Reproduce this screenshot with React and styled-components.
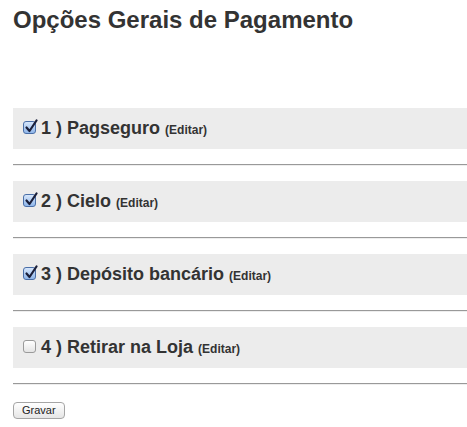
import styled, { createGlobalStyle } from 'styled-components'

const GlobalStyle = createGlobalStyle`
  body {
    margin: 0;
    background: #fff;
    font-family: 'Liberation Sans', Arial, Helvetica, sans-serif;
    color: #333;
  }
`

const options = [
  { id: 1, name: 'Pagseguro', checked: true },
  { id: 2, name: 'Cielo', checked: true },
  { id: 3, name: 'Depósito bancário', checked: true },
  { id: 4, name: 'Retirar na Loja', checked: false },
]

const Checkbox = ({ checked }) => (
  <Box checked={checked}>
    {checked && (
      <svg width='14' height='15' viewBox='0 0 14 15'>
        <path
          d='M2.5 8.5 L5.5 12 L12.5 1.5'
          fill='none'
          stroke='#1a1f3a'
          strokeWidth='2.2'
          strokeLinecap='round'
          strokeLinejoin='round'
        />
      </svg>
    )}
  </Box>
)

const App = () => {
  return (
    <Page>
      <GlobalStyle />
      <Title>Opções Gerais de Pagamento</Title>
      <List>
        {options.map((opt) => (
          <Item key={opt.id}>
            <Band>
              <Checkbox checked={opt.checked} />
              <Label>
                {opt.id} ) {opt.name} <Edit>(Editar)</Edit>
              </Label>
            </Band>
            <Rule />
          </Item>
        ))}
      </List>
      <Button>Gravar</Button>
    </Page>
  )
}

const Page = styled.div`
  padding: 0 0 0 13px;
`

const Title = styled.h2`
  margin: 0;
  padding-top: 6px;
  font-size: 24px;
  line-height: 28px;
  font-weight: bold;
  color: #333;
`

const List = styled.div`
  display: flex;
  flex-direction: column;
  margin-top: 74px;
`

const Item = styled.div`
  display: flex;
  flex-direction: column;
`

const Band = styled.div`
  display: flex;
  align-items: center;
  gap: 5px;
  height: 41px;
  padding-left: 10px;
  background: #ececec;
`

const Box = styled.span`
  position: relative;
  width: 13px;
  height: 13px;
  box-sizing: border-box;
  border-radius: 3px;
  flex-shrink: 0;
  margin-top: -3px;
  border: 1px solid ${(p) => (p.checked ? '#4a6fa8' : '#9a9a9a')};
  background: ${(p) =>
    p.checked
      ? 'linear-gradient(#d6e6fb, #8fb6ea)'
      : 'linear-gradient(#ffffff, #e4e4e4)'};
  svg {
    position: absolute;
    left: 0;
    top: -3px;
  }
`

const Label = styled.span`
  font-size: 18px;
  font-weight: bold;
  color: #333;
`

const Edit = styled.span`
  font-size: 12px;
  font-weight: bold;
`

const Rule = styled.div`
  margin: 15px 0;
  height: 1px;
  border-top: 1px solid #999;
  background: #eee;
`

const Button = styled.button`
  margin-top: -5px;
  height: 17px;
  padding: 0 8px;
  font-family: 'Liberation Sans', Arial, sans-serif;
  font-size: 11px;
  color: #222;
  border: 1px solid #a5a5a5;
  border-radius: 4px;
  background: linear-gradient(#ffffff, #e6e6e6);
  line-height: 14px;
`

export default App
